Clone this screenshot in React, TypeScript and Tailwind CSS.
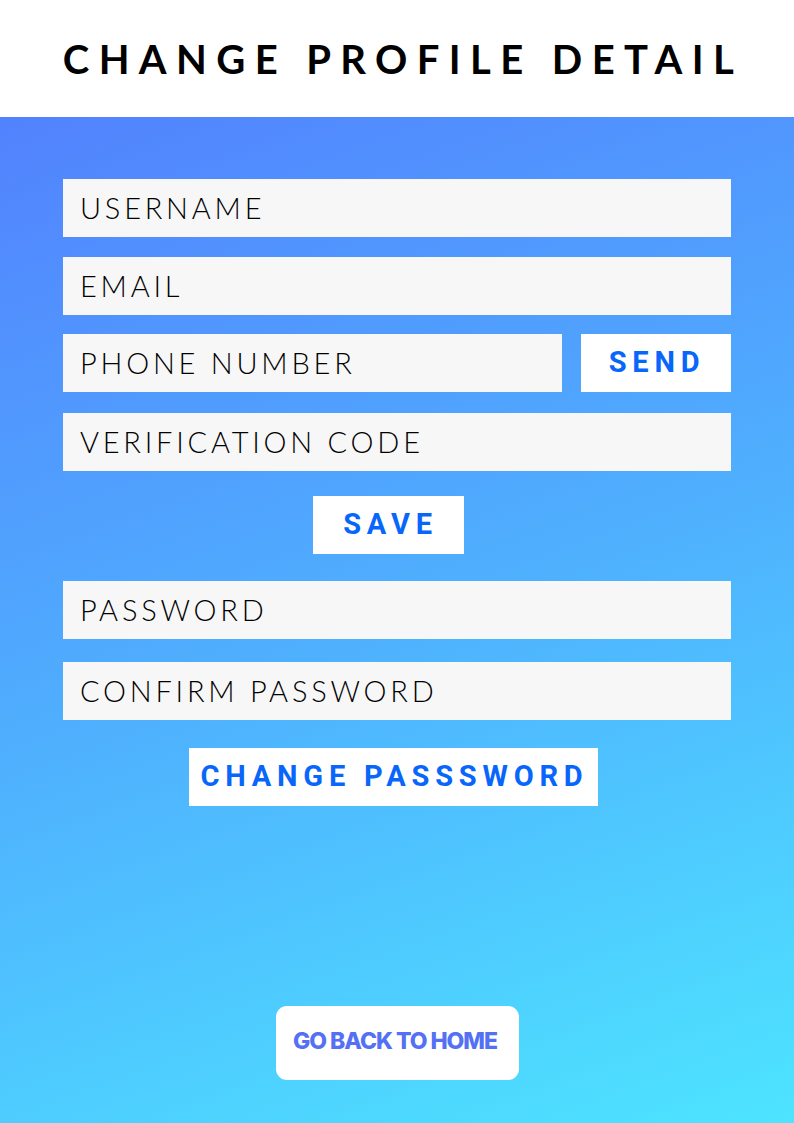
import React from 'react';

const fieldText = "font-['Lato','Liberation_Sans',sans-serif] font-light text-[29px] tracking-[0.13em] text-black";
const btnText = "font-['Roboto','Liberation_Sans',sans-serif] font-bold text-[29px] tracking-[0.2em] text-[#0866fb]";

function Field({ label, className = '' }: { label: string; className?: string }) {
  return (
    <div className={`h-[58px] bg-[#f7f7f7] flex items-center pl-[17px] ${className}`}>
      <span className={fieldText}>{label}</span>
    </div>
  );
}

export default function App() {
  return (
    <div className="w-[794px] h-[1123px] flex flex-col overflow-hidden">
      {/* Title bar */}
      <header className="h-[117px] bg-white flex items-center justify-center">
        <h1 className="font-['Lato','Liberation_Sans',sans-serif] font-bold text-[40px] tracking-[0.235em] text-black pl-[12px] leading-none">
          CHANGE PROFILE DETAIL
        </h1>
      </header>

      {/* Form area */}
      <main className="flex-1 bg-[linear-gradient(160deg,#5282fe_0%,#4fb0fe_50%,#4de4ff_100%)] px-[63px] pt-[62px] flex flex-col">
        <Field label="USERNAME" />
        <Field label="EMAIL" className="mt-[20px]" />

        <div className="mt-[19px] flex gap-[19px]">
          <Field label="PHONE NUMBER" className="flex-1" />
          <button className="w-[150px] h-[58px] bg-white flex items-center justify-center">
            <span className={`${btnText} pl-[2px]`}>SEND</span>
          </button>
        </div>

        <Field label="VERIFICATION CODE" className="mt-[21px]" />

        <div className="mt-[25px] flex justify-center pr-[18px]">
          <button className="w-[151px] h-[58px] bg-white flex items-center justify-center">
            <span className={`${btnText} pl-[5px]`}>SAVE</span>
          </button>
        </div>

        <Field label="PASSWORD" className="mt-[27px]" />
        <Field label="CONFIRM PASSWORD" className="mt-[23px]" />

        <div className="mt-[28px] flex justify-center pr-[8px]">
          <button className="w-[409px] h-[58px] bg-white flex items-center justify-center">
            <span className={`${btnText} pl-[3px]`}>CHANGE PASSSWORD</span>
          </button>
        </div>

        <div className="mt-auto mb-[43px] flex justify-center">
          <button className="w-[243px] h-[74px] bg-white rounded-[11px] flex items-center justify-center">
            <span className="font-['Inter','Liberation_Sans',sans-serif] font-extrabold text-[23px] tracking-[-0.045em] text-[#5470f4] pr-[4px] pb-[4px]">
              GO BACK TO HOME
            </span>
          </button>
        </div>
      </main>
    </div>
  );
}
